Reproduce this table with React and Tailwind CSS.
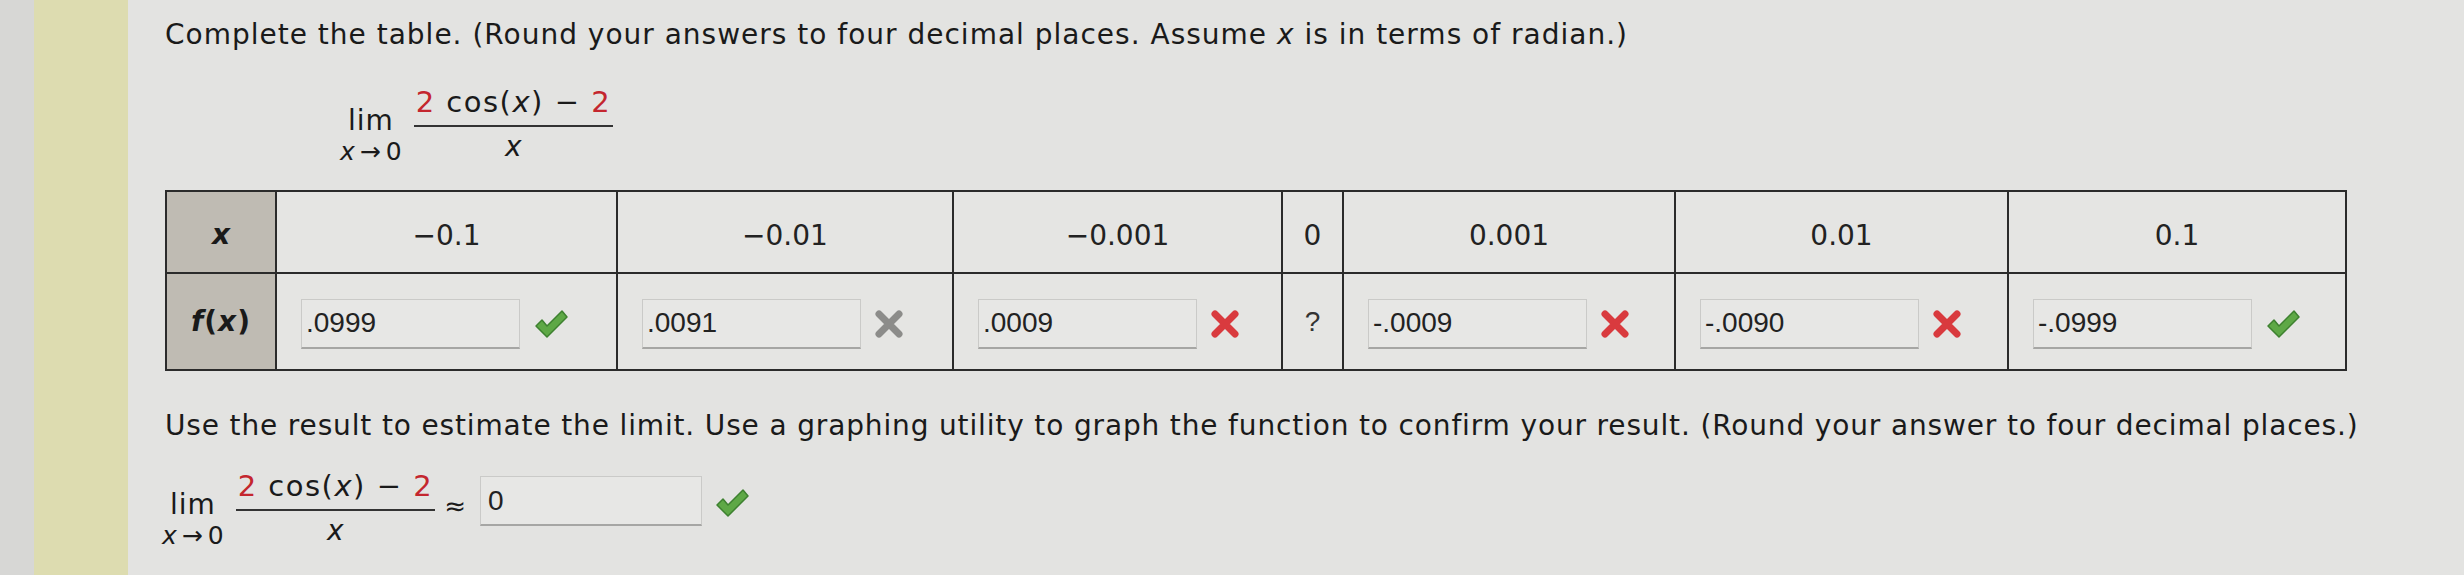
const sans = "font-['DejaVu_Sans',Verdana,sans-serif]";
const arial = "font-['Liberation_Sans',Arial,sans-serif]";

const cols = [
  { x: "−0.1", v: ".0999", mark: "check", w: "w-[341px]" },
  { x: "−0.01", v: ".0091", mark: "gray", w: "w-[336px]" },
  { x: "−0.001", v: ".0009", mark: "red", w: "w-[329px]" },
  { x: "0", v: null, mark: null, w: "w-[61px]" },
  { x: "0.001", v: "-.0009", mark: "red", w: "w-[332px]" },
  { x: "0.01", v: "-.0090", mark: "red", w: "w-[333px]" },
  { x: "0.1", v: "-.0999", mark: "check", w: "w-[338px]" },
];

function Check() {
  return (
    <svg width="36" height="32" viewBox="0 0 36 32">
      <path
        d="M3 18 L9 12 L14 18 L29 3 L34 9 L14 29 Z"
        fill="#5ea846"
        stroke="#3e8130"
        strokeWidth="1.5"
        strokeLinejoin="round"
      />
    </svg>
  );
}

function Cross({ color }) {
  return (
    <svg width="30" height="30" viewBox="0 0 30 30">
      <path d="M5 5 L25 25 M25 5 L5 25" stroke={color} strokeWidth="7" strokeLinecap="round" />
    </svg>
  );
}

function Mark({ type }) {
  if (type === "check") return <Check />;
  if (type === "red") return <Cross color="#d93a3e" />;
  return <Cross color="#8c8c8a" />;
}

function Field({ value, className = "" }) {
  return (
    <div
      className={`${arial} h-[50px] flex items-center text-[28px] text-[#222] bg-[#e7e7e5] border border-[#cacac8] border-b-2 border-b-[#a6a6a4] ${className}`}
    >
      {value}
    </div>
  );
}

function Limit() {
  return (
    <div className="flex items-start">
      <div className="flex flex-col items-center mt-[18px]">
        <span className="text-[28px] leading-[33px] tracking-[1px]">lim</span>
        <span className="text-[25px] leading-[29px] whitespace-nowrap">
          <i>x</i>
          <span className="mx-[5px]">→</span>0
        </span>
      </div>
      <div className="ml-[12px] flex flex-col items-center">
        <span className="px-[2px] pb-[7px] border-b-2 border-[#333] text-[29px] leading-[32px] tracking-[1.5px] whitespace-nowrap">
          <span className="text-[#c4262e]">2</span> cos(<i>x</i>) − <span className="text-[#c4262e]">2</span>
        </span>
        <span className="pt-[4px] text-[28px] leading-[32px]">
          <i>x</i>
        </span>
      </div>
    </div>
  );
}

export default function App() {
  return (
    <div className={`${sans} w-[2464px] h-[575px] flex overflow-hidden text-[#1a1a1a] bg-[#e3e3e1]`}>
      <div className="w-[34px] bg-[#d7d7d5]" />
      <div className="w-[94px] bg-[#dddcb0]" />
      <div className="flex-1 pl-[37px]">
        <p className="pt-[18px] text-[28px] leading-[34px] tracking-[1px]">
          Complete the table. (Round your answers to four decimal places. Assume <i>x</i> is in terms of
          radian.)
        </p>

        <div className="mt-[34px] ml-[175px]">
          <Limit />
        </div>

        <table className="mt-[24px] border-collapse table-fixed w-[2180px]">
          <tbody>
            <tr className="h-[82px]">
              <td className="w-[110px] border-2 border-[#2b2b2b] bg-[#bfbbb3] text-center text-[28px] font-bold pt-[6px]">
                <i>x</i>
              </td>
              {cols.map((c) => (
                <td
                  key={c.x}
                  className={`${c.w} border-2 border-[#2b2b2b] bg-[#e5e5e3] text-center text-[28px] text-[#222] pt-[8px]`}
                >
                  {c.x}
                </td>
              ))}
            </tr>
            <tr className="h-[97px]">
              <td className="border-2 border-[#2b2b2b] bg-[#bfbbb3] text-center text-[28px] font-bold tracking-[1px]">
                <i>f</i>(<i>x</i>)
              </td>
              {cols.map((c) => (
                <td key={c.x} className="border-2 border-[#2b2b2b] bg-[#e5e5e3]">
                  {c.v ? (
                    <div className="flex items-center pl-[24px] pt-[4px]">
                      <Field value={c.v} className="w-[219px] pl-[4px]" />
                      <div className="ml-[13px]">
                        <Mark type={c.mark} />
                      </div>
                    </div>
                  ) : (
                    <div className={`${arial} text-center text-[28px] text-[#333]`}>?</div>
                  )}
                </td>
              ))}
            </tr>
          </tbody>
        </table>

        <p className="mt-[38px] text-[28px] leading-[34px] tracking-[0.85px]">
          Use the result to estimate the limit. Use a graphing utility to graph the function to confirm
          your result. (Round your answer to four decimal places.)
        </p>

        <div className="mt-[27px] -ml-[3px] flex items-start">
          <Limit />
          <span className="ml-[9px] mt-[21px] text-[26px] leading-[30px]">≈</span>
          <Field value="0" className="ml-[14px] mt-[6px] w-[222px] pl-[7px]" />
          <div className="ml-[12px] mt-[17px]">
            <Check />
          </div>
        </div>
      </div>
    </div>
  );
}
